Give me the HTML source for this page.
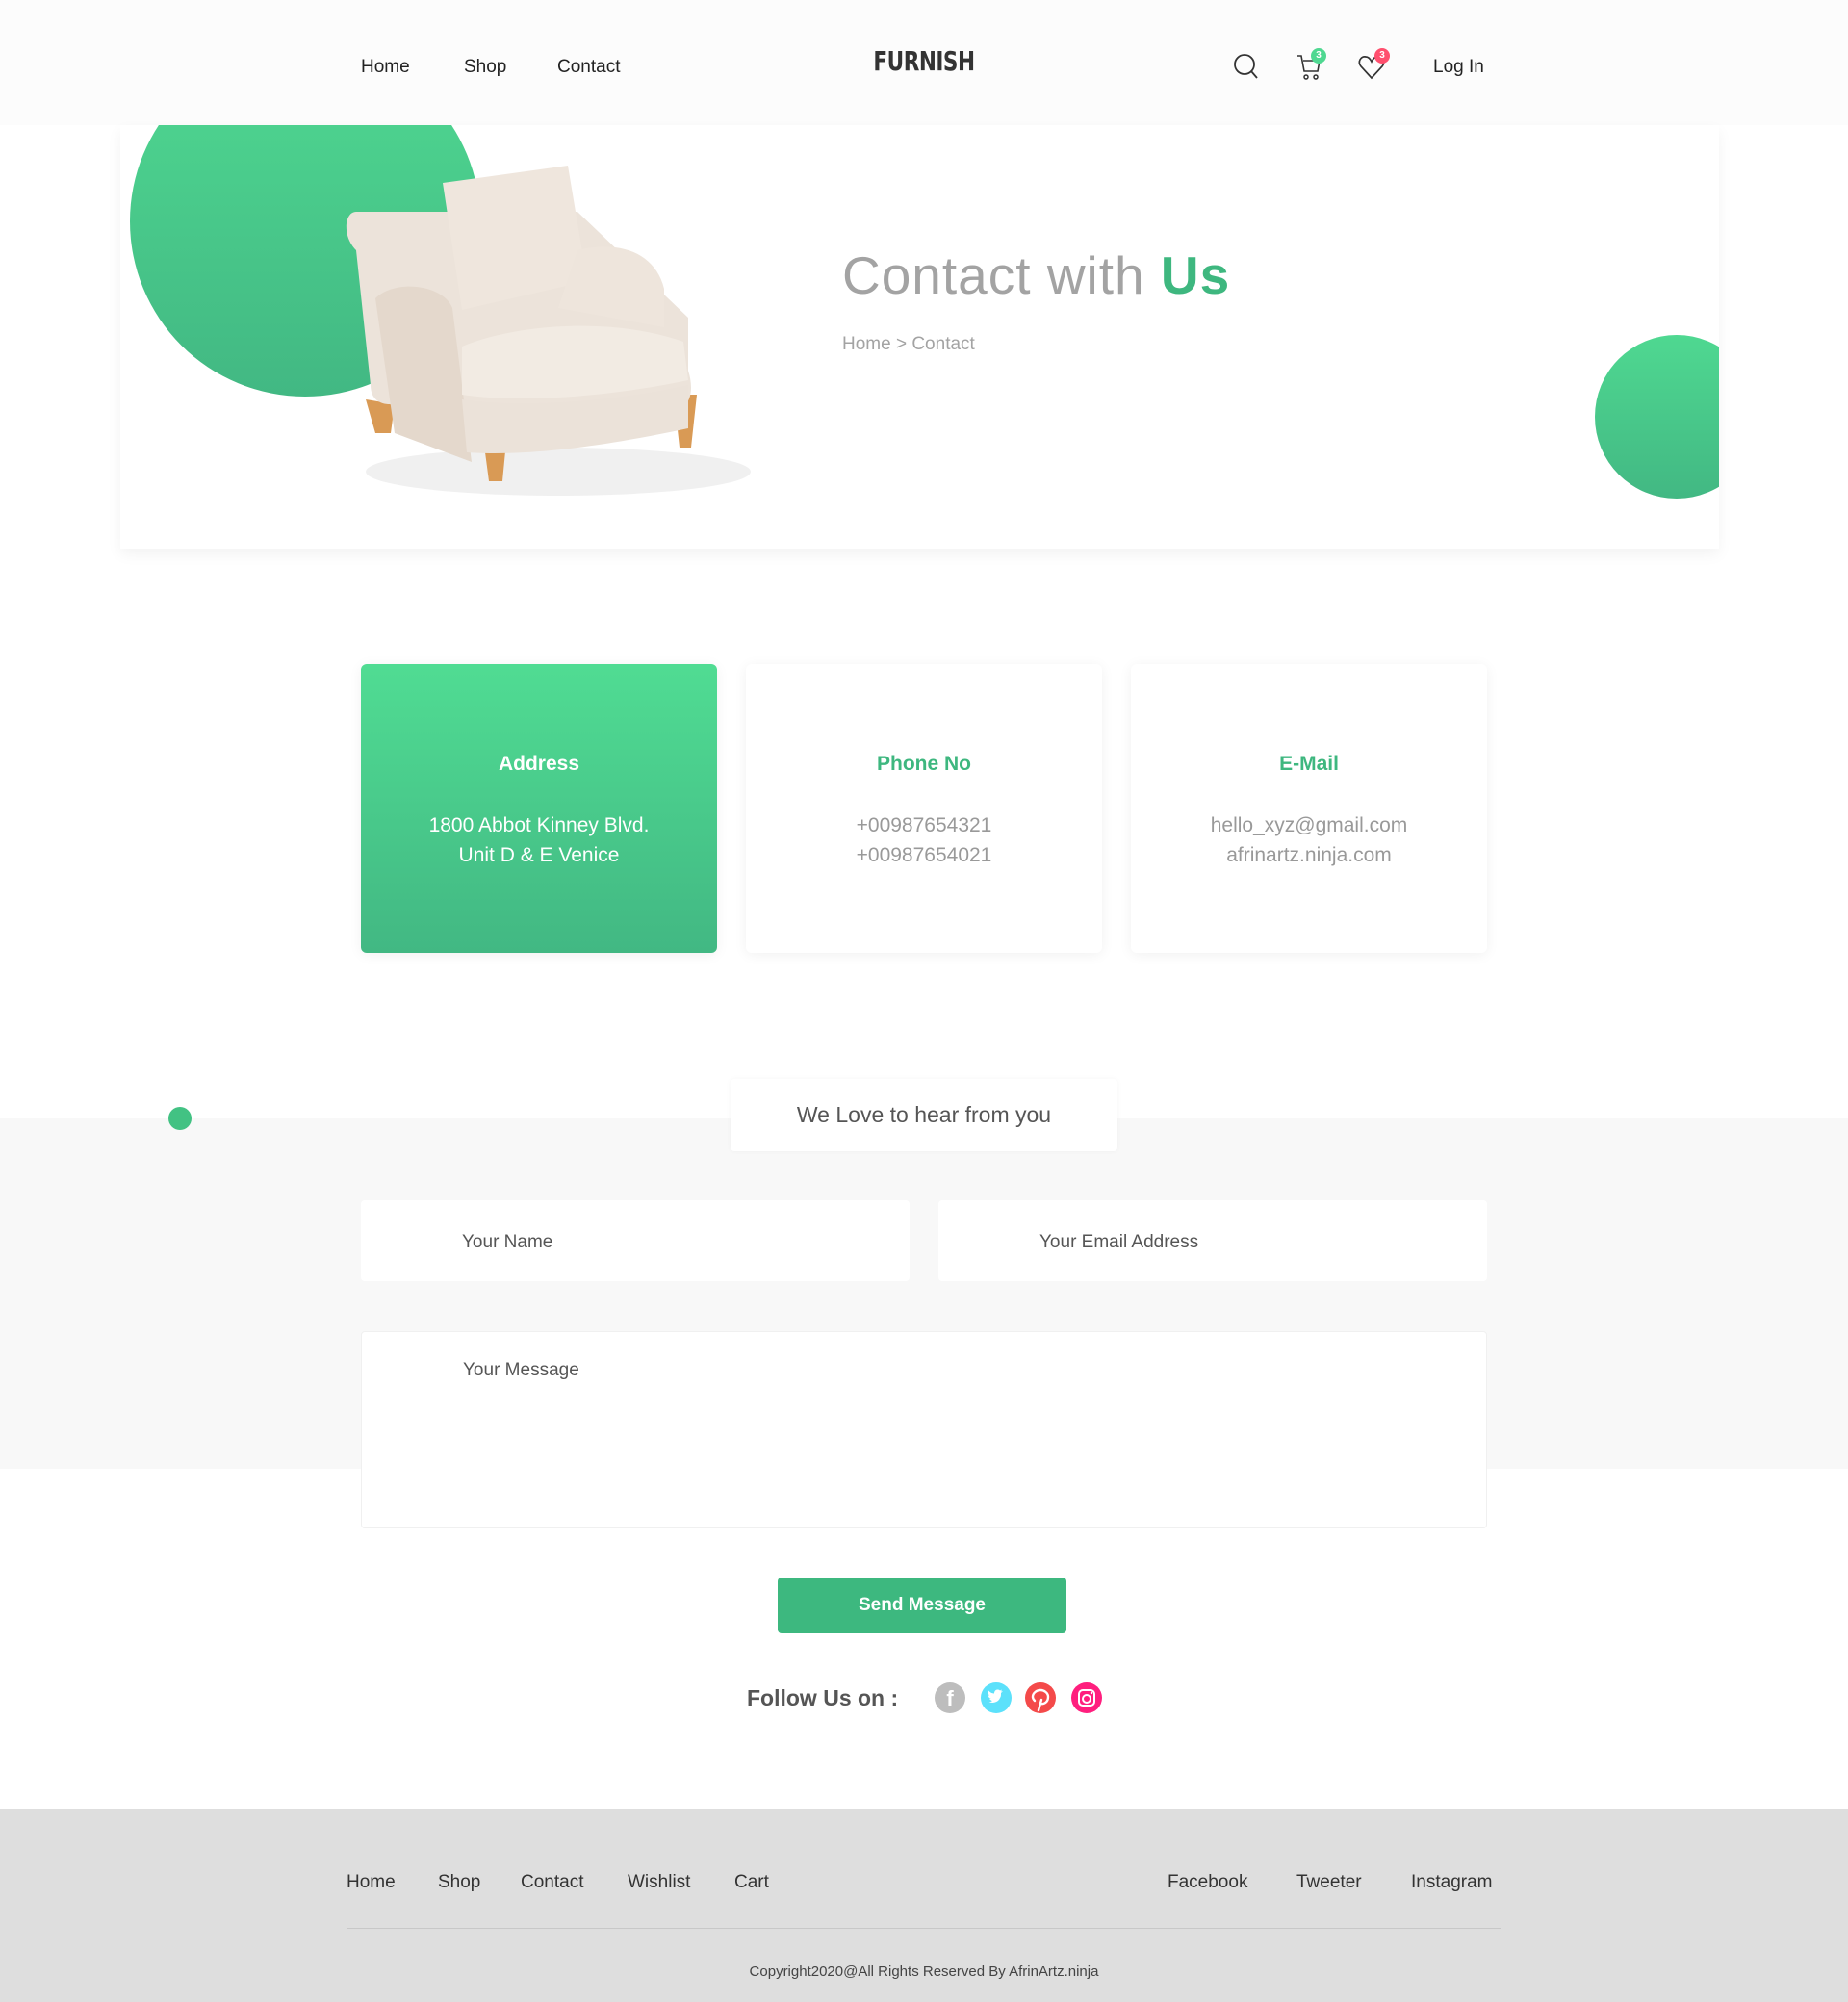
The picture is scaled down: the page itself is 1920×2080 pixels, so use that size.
<!DOCTYPE html>
<html><head><meta charset="utf-8"><style>
*{margin:0;padding:0;box-sizing:border-box}
body{width:1920px;height:2080px;background:#fff;font-family:"Liberation Sans",sans-serif;position:relative;overflow:hidden;color:#333}
.a{position:absolute}
.header{left:0;top:0;width:1920px;height:130px;background:#fcfcfc}
.nav{font-size:19px;color:#222;top:59px}
.hero{left:125px;top:130px;width:1661px;height:440px;background:#fff;box-shadow:0 6px 14px rgba(0,0,0,.05);overflow:hidden}
.card{top:690px;width:370px;height:300px;border-radius:6px;background:#fff;box-shadow:0 2px 14px rgba(0,0,0,.06);text-align:center}
.card h3{position:absolute;top:92px;width:100%;font-size:21px;color:#3eb77f}
.card p{position:absolute;top:152px;width:100%;font-size:21px;line-height:31px;color:#999}
.inp{background:#fff;border-radius:4px;font-size:19px;color:#555}
.ft{top:1945px;font-size:19px;color:#333}
</style></head><body>
<div class="a header"></div>
<div class="a nav" style="left:375px">Home</div>
<div class="a nav" style="left:482px">Shop</div>
<div class="a nav" style="left:579px">Contact</div>
<div class="a" style="left:898px;top:50px;width:124px;text-align:center;font-family:'DejaVu Sans Condensed','DejaVu Sans',sans-serif;font-size:24px;font-weight:900;color:#333;letter-spacing:-0.5px;transform:scaleY(1.15)">FURNISH</div>
<svg class="a" style="left:1280px;top:54px" width="28" height="30" viewBox="0 0 28 30"><circle cx="13" cy="13" r="10" fill="none" stroke="#333" stroke-width="1.8"/><path d="M20 20l6 7" stroke="#333" stroke-width="1.8"/></svg>
<svg class="a" style="left:1346px;top:55px" width="30" height="30" viewBox="0 0 30 30"><path d="M2 3h4l3 16h14l2-11H8" fill="none" stroke="#333" stroke-width="1.6"/><circle cx="11" cy="25" r="2" fill="none" stroke="#333" stroke-width="1.5"/><circle cx="21" cy="25" r="2" fill="none" stroke="#333" stroke-width="1.5"/></svg>
<div class="a" style="left:1362px;top:50px;width:16px;height:16px;border-radius:8px;background:#4fd891;color:#fff;font-size:10px;font-weight:bold;text-align:center;line-height:16px">3</div>
<svg class="a" style="left:1410px;top:55px" width="30" height="30" viewBox="0 0 30 30"><path d="M15 26L4 14C0 9 4 3 9 4c3 0 5 3 6 5 1-2 3-5 6-5 5-1 9 5 5 10z" fill="none" stroke="#333" stroke-width="1.7"/></svg>
<div class="a" style="left:1428px;top:50px;width:16px;height:16px;border-radius:8px;background:#ff4f6e;color:#fff;font-size:10px;font-weight:bold;text-align:center;line-height:16px">3</div>
<div class="a nav" style="left:1489px">Log In</div>

<div class="a hero">
 <div class="a" style="left:10px;top:-82px;width:364px;height:364px;border-radius:50%;background:linear-gradient(#4fd891,#42b883)"></div>
 <div class="a" style="left:1532px;top:218px;width:170px;height:170px;border-radius:50%;background:linear-gradient(#4fd891,#42b883)"></div>
 <svg class="a" style="left:195px;top:30px" width="460" height="380" viewBox="0 0 460 380">
  <ellipse cx="260" cy="330" rx="200" ry="25" fill="#000" opacity=".06"/>
  <path d="M60 255l10 35h16l4-30z" fill="#d99a55"/>
  <path d="M180 280l8 60h14l6-62z" fill="#d99a55"/>
  <path d="M380 250l6 55h12l6-55z" fill="#d99a55"/>
  <path d="M50 60c-12 0-15 25 0 40l15 140c0 15 10 20 20 20l110 40 190-35c15-5 15-25 10-40V170L280 60z" fill="#ece3da"/>
  <path d="M70 150c20-20 70-15 80 10l20 160-80-30-20-140z" fill="#e4d8cc"/>
  <path d="M140 30l130-18 20 120-130 30z" fill="#efe6dd"/>
  <path d="M280 100c40-10 80 0 90 40l0 40-110-20z" fill="#eee5dc"/>
  <path d="M160 200c60-25 160-30 230-5l5 40c-70 15-170 25-235 15z" fill="#f2ebe3"/>
  <path d="M160 255c70 10 170 0 235-15l0 45c-70 15-160 30-230 25z" fill="#ebe2d9"/>
 </svg>
</div>
<div class="a" style="left:875px;top:254px;font-size:55px;color:#a3a3a3;letter-spacing:1px">Contact with <b style="color:#3eb77f">Us</b></div>
<div class="a" style="left:875px;top:347px;font-size:19px;color:#a3a3a3">Home &gt; Contact</div>

<div class="a card" style="left:375px;background:linear-gradient(#50dc93,#42b883)"><h3 style="color:#fff">Address</h3><p style="color:#fff">1800 Abbot Kinney Blvd.<br>Unit D &amp; E Venice</p></div>
<div class="a card" style="left:775px"><h3>Phone No</h3><p>+00987654321<br>+00987654021</p></div>
<div class="a card" style="left:1175px"><h3>E-Mail</h3><p>hello_xyz@gmail.com<br>afrinartz.ninja.com</p></div>

<div class="a" style="left:0;top:1162px;width:1920px;height:364px;background:#f8f8f8"></div>
<div class="a" style="left:175px;top:1150px;width:24px;height:24px;border-radius:50%;background:#42c283"></div>
<div class="a" style="left:759px;top:1121px;width:402px;height:75px;background:#fff;border-radius:4px;box-shadow:0 0 6px rgba(0,0,0,.04);text-align:center;line-height:75px;font-size:23px;color:#555">We Love to hear from you</div>
<div class="a inp" style="left:375px;top:1247px;width:570px;height:84px;padding:33px 0 0 105px">Your Name</div>
<div class="a inp" style="left:975px;top:1247px;width:570px;height:84px;padding:33px 0 0 105px">Your Email Address</div>
<div class="a inp" style="left:375px;top:1383px;width:1170px;height:205px;padding:29px 0 0 105px;border:1px solid #f0f0f0">Your Message</div>
<div class="a" style="left:808px;top:1639px;width:300px;height:58px;background:#3db87f;border-radius:4px;color:#fff;font-size:19px;font-weight:bold;text-align:center;line-height:58px">Send Message</div>
<div class="a" style="left:776px;top:1751px;font-size:23px;font-weight:bold;color:#555">Follow Us on :</div>
<div class="a" style="left:971px;top:1748px;width:32px;height:32px;border-radius:50%;background:#bdbdbd;color:#fff;font-weight:bold;font-size:22px;text-align:center;line-height:34px">f</div>
<svg class="a" style="left:1019px;top:1748px" width="32" height="32" viewBox="0 0 32 32"><circle cx="16" cy="16" r="16" fill="#5ce1fb"/><path d="M8 20c4 2 10 1 12-4 1-1 1-3 1-5l2-2-2 .5 1-2-2 1c-2-2-6-1-6 3-3 0-5-2-6-3-1 2 0 4 1 5l-1 0c0 2 1 3 3 3l-2 .5c1 1 2 2 3 2-1 1-3 1.5-4 1z" fill="#fff"/></svg>
<svg class="a" style="left:1065px;top:1748px" width="32" height="32" viewBox="0 0 32 32"><circle cx="16" cy="16" r="16" fill="#f44a4a"/><path d="M14 29l3-11m-1 4c4 1 8-2 8-7 0-4-4-7-8-7s-8 3-8 7c0 2 1 3 2 4" fill="none" stroke="#fff" stroke-width="2.4" stroke-linecap="round"/></svg>
<svg class="a" style="left:1113px;top:1748px" width="32" height="32" viewBox="0 0 32 32"><circle cx="16" cy="16" r="16" fill="#ff1f7e"/><rect x="8" y="8" width="16" height="16" rx="4" fill="none" stroke="#fff" stroke-width="2"/><circle cx="16" cy="17" r="4" fill="none" stroke="#fff" stroke-width="2"/><circle cx="21" cy="11" r="1.2" fill="#fff"/></svg>

<div class="a" style="left:0;top:1880px;width:1920px;height:200px;background:#dedede"></div>
<div class="a ft" style="left:360px">Home</div>
<div class="a ft" style="left:455px">Shop</div>
<div class="a ft" style="left:541px">Contact</div>
<div class="a ft" style="left:652px">Wishlist</div>
<div class="a ft" style="left:763px">Cart</div>
<div class="a ft" style="left:1213px">Facebook</div>
<div class="a ft" style="left:1347px">Tweeter</div>
<div class="a ft" style="left:1466px">Instagram</div>
<div class="a" style="left:360px;top:2003px;width:1200px;height:1px;background:#c8c8c8"></div>
<div class="a" style="left:0;top:2040px;width:1920px;text-align:center;font-size:15px;color:#444">Copyright2020@All Rights Reserved By AfrinArtz.ninja</div>
</body></html>
